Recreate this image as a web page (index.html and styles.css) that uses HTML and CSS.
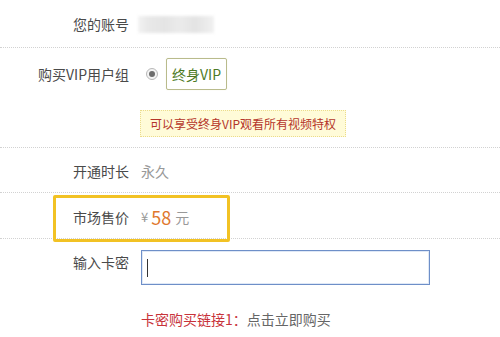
FILE: index.html
```html
<!DOCTYPE html>
<html lang="zh">
<head>
<meta charset="utf-8">
<link rel="stylesheet" href="styles.css">
</head>
<body>
<div class="form">
  <div class="row row-account">
    <div class="label">您的账号</div>
    <div class="value"><span class="blurred"></span></div>
  </div>
  <div class="row row-group">
    <div class="line">
      <div class="label">购买VIP用户组</div>
      <div class="value group-value">
        <span class="radio"><span class="radio-dot"></span></span>
        <span class="vip-tag">终身VIP</span>
      </div>
    </div>
    <div class="notice">可以享受终身VIP观看所有视频特权</div>
  </div>
  <div class="row row-duration">
    <div class="label">开通时长</div>
    <div class="value muted">永久</div>
  </div>
  <div class="row row-price">
    <div class="label">市场售价</div>
    <div class="value price"><span class="yen">¥</span><span class="amount">58</span><span class="unit">元</span></div>
    <div class="highlight"></div>
  </div>
  <div class="row-card">
    <div class="line line-top">
      <div class="label label-card">输入卡密</div>
      <div class="value"><div class="card-input"><span class="caret"></span></div></div>
    </div>
    <div class="buy-link"><span class="link-label">卡密购买链接1：</span><span class="link-action">点击立即购买</span></div>
  </div>
</div>
</body>
</html>
```
FILE: styles.css
```css
* { box-sizing: border-box; }
html, body { margin: 0; padding: 0; background: #fff; }
body {
  font-family: "Noto Sans CJK SC", "Noto Sans", sans-serif;
  font-size: 14px;
  color: #4a4a4a;
  width: 500px;
  height: 337px;
  overflow: hidden;
}
.form { width: 500px; }
.row {
  display: flex;
  align-items: center;
  border-bottom: 1px dotted #d2d2d2;
  line-height: 20px;
  position: relative;
}
.label {
  width: 129px;
  text-align: right;
  flex: none;
  color: #4a4a4a;
}
.value {
  padding-left: 12px;
  display: flex;
  align-items: center;
}
.row-account { padding: 14px 0 13px; }
.blurred {
  display: block;
  width: 76px;
  height: 17px;
  margin-left: -3px;
  background: linear-gradient(90deg, #f3f3f3 0, #e9e9e9 12%, #e4e4e4 35%, #ebebeb 55%, #e3e3e3 75%, #f1f1f1 100%);
  filter: blur(1.5px);
}
.row-group {
  flex-direction: column;
  align-items: stretch;
  padding: 10px 0 10px;
}
.line { display: flex; align-items: center; }
.group-value { gap: 8px; padding-left: 17px; }
.radio {
  width: 12px;
  height: 12px;
  border-radius: 50%;
  border: 1px solid #b8b8b8;
  background: #f4f4f4;
  display: flex;
  align-items: center;
  justify-content: center;
}
.radio-dot {
  width: 6px;
  height: 6px;
  border-radius: 50%;
  background: #6d6d6d;
}
.vip-tag {
  display: flex;
  align-items: center;
  height: 32px;
  padding: 0 5px;
  border: 1px solid #b9bb8c;
  border-radius: 2px;
  color: #4d7a25;
  font-size: 14px;
  box-shadow: 0 0 1px #e5e6c8;
}
.notice {
  align-self: flex-start;
  margin: 20px 0 0 140px;
  height: 27px;
  padding: 0 9px;
  display: flex;
  align-items: center;
  font-size: 12px;
  color: #b5352a;
  background: #fffbd8;
  border: 1px dotted #ebdc8c;
}
.row-duration { padding: 13px 0 11px; }
.muted { color: #999; }
.row-price { padding: 14px 0 11px; }
.price { color: #999; }
.yen { font-size: 13px; margin-right: 3px; }
.amount { color: #e0782e; font-size: 18px; margin-right: 4px; }
.unit { font-size: 14px; }
.highlight {
  position: absolute;
  left: 53px;
  top: 2px;
  width: 177px;
  height: 47px;
  border: 3px solid #f2c224;
  border-radius: 2px;
}
.row-card { padding-top: 11px; line-height: 20px; }
.line-top { align-items: flex-start; }
.label-card { margin-top: 2px; }
.card-input {
  width: 289px;
  height: 35px;
  border: 1px solid #6e8fc8;
  box-shadow: inset 0 0 0 1px #dfe8f6;
  display: flex;
  align-items: center;
  padding-left: 5px;
}
.caret {
  width: 1px;
  height: 18px;
  background: #333;
}
.buy-link {
  margin: 24px 0 0 141px;
  font-size: 14px;
}
.link-label { color: #c8333a; }
.link-action { color: #666; }
```
